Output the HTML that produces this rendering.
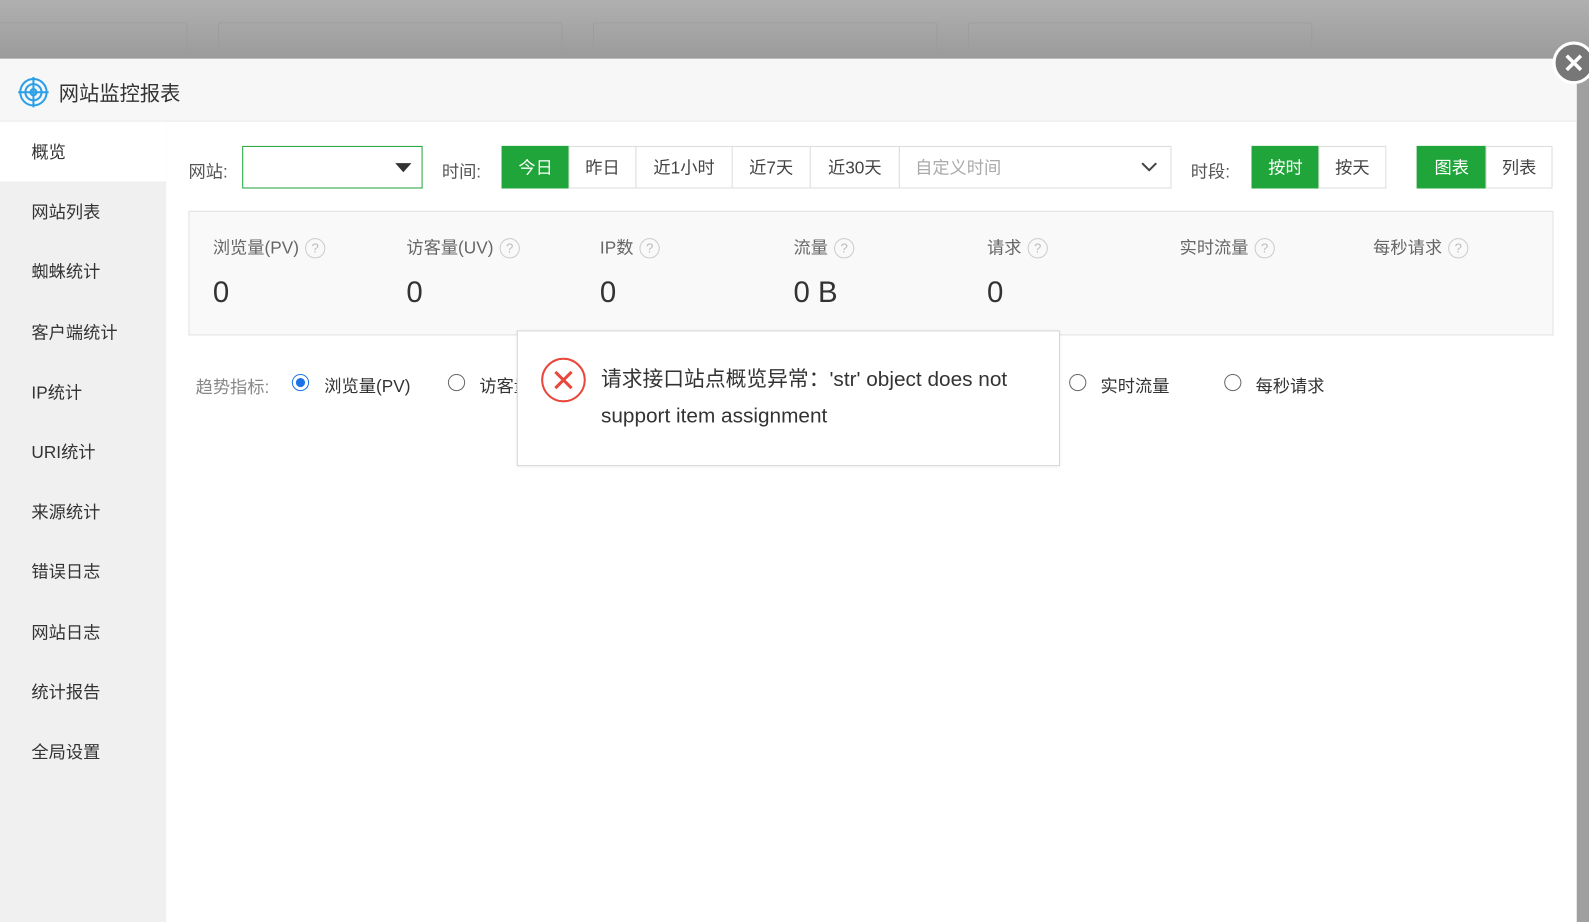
<!DOCTYPE html>
<html><head><meta charset="utf-8"><style>
*{box-sizing:border-box;margin:0;padding:0}
body{width:1589px;height:910px;overflow:hidden;position:relative;background:#a0a0a0;font-family:"Liberation Sans","Noto Sans CJK SC",sans-serif;color:#333}
#w{position:absolute;left:0;top:0;width:1568px;height:898px;transform:scale(1.0134);transform-origin:0 0;background:linear-gradient(#b0b0b0,#9a9a9a 60px,#a0a0a0)}
.bgcard{position:absolute;top:22px;height:40px;border:1px solid #9c9c9c;border-bottom:none;border-radius:3px;background:linear-gradient(#a8a8a8,#999)}
.modal{position:absolute;left:0;top:58px;width:1556px;height:852px;background:#fff}
.hd{height:62px;background:#f7f7f7;border-bottom:1px solid #e8e8e8;position:relative}
.hd span{position:absolute;left:58px;top:18px;font-size:20px;color:#333}
.side{position:absolute;left:0;top:62px;width:164px;bottom:0;background:#f0f0f0}
.side div{height:59.2px;line-height:62px;padding-left:31px;font-size:17px;color:#333}
.side div.on{background:#fff}
.abs{position:absolute}
.lbl{font-size:17px;color:#555}
.btn{position:absolute;top:86px;height:42px;line-height:42px;text-align:center;font-size:17px;border:1px solid #ddd;background:#fff;color:#444}
.g{background:#20a53a;border-color:#20a53a;color:#fff}
.stats{position:absolute;left:186px;top:150px;width:1347px;height:123px;background:#f9f9f9;border:1px solid #e2e2e2}
.st{position:absolute;top:21px;font-size:17px;color:#666}
.q{display:inline-block;width:20px;height:20px;border:1px solid #ccc;border-radius:50%;font-size:13px;line-height:18px;text-align:center;color:#bbb;margin-left:6px;vertical-align:1px}
.num{position:absolute;top:64px;font-size:29px;color:#333}
.radio{position:absolute;top:311px;width:17px;height:17px;border:1.5px solid #666;border-radius:50%}
.rl{position:absolute;top:309px;font-size:17px;color:#333}
</style></head><body><div id="w">
<div class="bgcard" style="left:-10px;width:195px"></div>
<div class="bgcard" style="left:215px;width:340px"></div>
<div class="bgcard" style="left:585px;width:340px"></div>
<div class="bgcard" style="left:955px;width:340px"></div>
<div class="modal">
 <div class="hd">
  <svg class="abs" style="left:17px;top:17px" width="32" height="32" viewBox="0 0 32 32" fill="none" stroke="#2a9fe8" stroke-width="2"><circle cx="16" cy="16" r="13"/><circle cx="16" cy="16" r="8"/><circle cx="16" cy="16" r="3"/><path d="M16 1v30M1 16h30"/></svg>
  <span>网站监控报表</span>
 </div>
 <div class="side">
  <div class="on">概览</div><div>网站列表</div><div>蜘蛛统计</div><div>客户端统计</div><div>IP统计</div><div>URI统计</div><div>来源统计</div><div>错误日志</div><div>网站日志</div><div>统计报告</div><div>全局设置</div>
 </div>
 <span class="abs lbl" style="left:186px;top:97px">网站:</span>
 <div class="abs" style="left:239px;top:86px;width:178px;height:42px;border:1px solid #20a53a;background:#fff"><div style="position:absolute;right:10px;top:16px;border-left:8px solid transparent;border-right:8px solid transparent;border-top:9px solid #333"></div></div>
 <span class="abs lbl" style="left:436px;top:97px">时间:</span>
 <div class="btn g" style="left:495px;width:67px">今日</div>
 <div class="btn" style="left:561px;width:67px">昨日</div>
 <div class="btn" style="left:627px;width:96px">近1小时</div>
 <div class="btn" style="left:722px;width:78px">近7天</div>
 <div class="btn" style="left:799px;width:89px">近30天</div>
 <div class="btn" style="left:887px;width:269px;text-align:left;padding-left:15px;color:#aaa">自定义时间<svg class="abs" style="right:12px;top:14px" width="18" height="12" viewBox="0 0 18 12"><path d="M2 2l7 7 7-7" stroke="#444" stroke-width="2" fill="none"/></svg></div>
 <span class="abs lbl" style="left:1175px;top:97px">时段:</span>
 <div class="btn g" style="left:1235px;width:67px">按时</div>
 <div class="btn" style="left:1301px;width:67px">按天</div>
 <div class="btn g" style="left:1398px;width:69px">图表</div>
 <div class="btn" style="left:1466px;width:66px">列表</div>
 <div class="stats">
  <div class="st" style="left:23px">浏览量(PV)<span class="q">?</span></div>
  <div class="st" style="left:214px">访客量(UV)<span class="q">?</span></div>
  <div class="st" style="left:405px">IP数<span class="q">?</span></div>
  <div class="st" style="left:596px">流量<span class="q">?</span></div>
  <div class="st" style="left:787px">请求<span class="q">?</span></div>
  <div class="st" style="left:977px">实时流量<span class="q">?</span></div>
  <div class="st" style="left:1168px">每秒请求<span class="q">?</span></div>
  <div class="num" style="left:23px">0</div><div class="num" style="left:214px">0</div><div class="num" style="left:405px">0</div><div class="num" style="left:596px">0 B</div><div class="num" style="left:787px">0</div>
 </div>
 <span class="abs" style="left:193px;top:310px;font-size:17px;color:#888">趋势指标:</span>
 <div class="radio" style="left:288px;border-color:#1a73e8"><div style="margin:2.5px;width:9px;height:9px;border-radius:50%;background:#1a73e8"></div></div>
 <span class="rl" style="left:320px">浏览量(PV)</span>
 <div class="radio" style="left:442px"></div><span class="rl" style="left:473px">访客量</span>
 <div class="radio" style="left:1055px"></div><span class="rl" style="left:1086px">实时流量</span>
 <div class="radio" style="left:1208px"></div><span class="rl" style="left:1239px">每秒请求</span>
 <div class="abs" style="left:510px;top:268px;width:536px;height:134px;background:#fff;border:1px solid #d6d6d6;box-shadow:0 1px 4px rgba(0,0,0,.08)">
  <svg class="abs" style="left:22px;top:25px" width="46" height="46" viewBox="0 0 46 46" fill="none" stroke="#e8483c" stroke-width="2"><circle cx="23" cy="23" r="21"/><path d="M15 15l16 16M31 15l-16 16" stroke-width="3"/></svg>
  <div class="abs" style="left:82px;top:30px;width:412px;font-size:20.5px;line-height:36px;color:#333;word-break:break-all">请求接口站点概览异常：'str' object does not support item assignment</div>
 </div>
</div>
<div style="position:absolute;right:0;top:58px;width:12px;height:852px;background:#a0a0a0"></div>
<div style="position:absolute;left:1532px;top:41px;width:42px;height:42px;border-radius:50%;background:#777;border:3px solid #fff">
<svg width="36" height="36" viewBox="0 0 36 36"><path d="M11 11l14 14M25 11L11 25" stroke="#fff" stroke-width="3.5"/></svg></div>
</div></body></html>
